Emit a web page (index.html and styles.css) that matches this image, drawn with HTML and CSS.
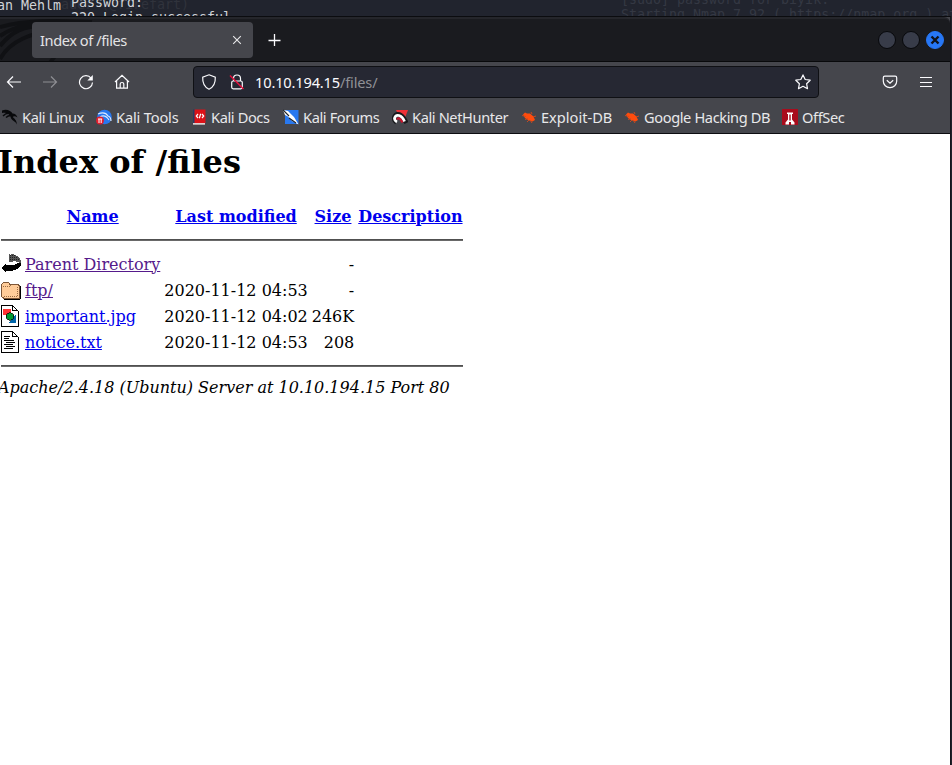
FILE: index.html
```html
<!DOCTYPE html>
<html lang="en">
<head>
<meta charset="utf-8">
<title>Index of /files</title>
<link rel="stylesheet" href="styles.css">
</head>
<body>
<div class="desktop">
  <div class="terminals">
    <pre class="term term-left">an Mehlm</pre>
    <pre class="term term-ghost">auer (@firefart)</pre>
    <pre class="term term-main">Password:
220 Login successful.</pre>
    <pre class="term term-faint">[sudo] password for biyik:
Starting Nmap 7.92 ( https://nmap.org ) at</pre>
  </div>
  <div class="browser">
    <header class="titlebar">
      <svg class="dragon" width="100" height="42" viewBox="0 0 100 42"><path d="M0 8C30 0 60 2 92 3M0 17C16 6 34 3 60 5M0 27C12 12 24 7 44 7M0 40C10 22 30 14 60 10M50 44C54 36 62 30 74 26" fill="none" stroke="#101114" stroke-width="4"/></svg>
      <div class="tab"><span>Index of /files</span>
        <svg width="10" height="10" viewBox="0 0 10 10"><path d="M1.2 1.2 8.800 8.800M8.800 1.200 1.200 8.800" stroke="#e8e8ea" stroke-width="1.100"/></svg>
      </div>
      <svg class="newtab" width="14" height="14" viewBox="0 0 14 14"><path d="M6.500 1v12M.5 7.500h12" stroke="#fbfbfe" stroke-width="1.300"/></svg>
      <div class="controls">
        <i class="dot"></i><i class="dot"></i>
        <i class="dot close"><svg width="10" height="10" viewBox="0 0 10 10"><path d="M1.500 1.500 8.500 8.500M8.500 1.500 1.500 8.500" stroke="#11131a" stroke-width="2.400"/></svg></i>
      </div>
    </header>
    <nav class="toolbar">
      <div class="navbuttons">
        <svg viewBox="0 0 16 16"><path d="M15 8H1.500M7 2.500 1.500 8 7 13.500"/></svg>
        <svg class="disabled" viewBox="0 0 16 16"><path d="M1 8h13.500M9 2.500 14.500 8 9 13.500"/></svg>
        <svg viewBox="0 0 16 16"><path d="M13.200 4.300A6.500 6.500 0 1 0 14.500 8.500"/><path d="M14.800 1v5.500H9.300Z" fill="#fbfbfe" stroke="none"/></svg>
        <svg viewBox="0 0 16 16"><path d="M1 8 8 1.300 15 8M2.600 7v7.200h10.800V7M6.200 14V10q0-1.500 1.800-1.500T9.800 10v4"/></svg>
      </div>
      <div class="urlbar">
        <svg viewBox="0 0 16 16"><path d="M8 .8 14.300 3.100C14.600 9 12.300 13.200 8 15.200 3.700 13.200 1.400 9 1.700 3.100Z"/></svg>
        <svg class="lock" viewBox="0 0 16 16"><path d="M4.500 7V4.500a3.500 3.500 0 0 1 7 0V7M2.700 8.500q0-1.500 1.500-1.500h7.600q1.500 0 1.500 1.500v4.800q0 1.500-1.500 1.500H4.200q-1.500 0-1.500-1.500Z"/><path d="M1 1.500 14.500 15" stroke="#e4103c" stroke-width="1.500"/></svg>
        <span class="url">10.10.194.15<span>/files/</span></span>
        <svg class="star" viewBox="0 0 16 16"><path d="M8 .9 10.200 5.500 15.200 6.200 11.600 9.700 12.500 14.700 8 12.300 3.500 14.700 4.400 9.700 .8 6.200 5.800 5.500Z" stroke-linejoin="round"/></svg>
      </div>
      <svg class="pocket" viewBox="0 0 16 16"><path d="M2.800 2.200h10.400q1.500 0 1.500 1.500V7.300A6.700 6.300 0 0 1 1.300 7.300V3.700q0-1.500 1.500-1.500ZM4.800 6.300 8 9.300l3.200-3"/></svg>
      <svg class="menu" viewBox="0 0 16 16"><path d="M2 3.500h12M2 8.500h12M2 12.500h12"/></svg>
    </nav>
    <div class="bookmarks">
      <a><svg viewBox="0 0 16 16"><path d="M0 1.500C5-.5 9 2 10.500 4.500 13 4.500 14.500 6 15.500 8.500 13.500 7 11.500 7 10.700 8c1.500 1.500 4 3 4.300 7.500C13.500 11.500 9 12 8.500 7.500 7 4.500 4 3 0 4Z" fill="#08090b"/><path d="M1 7q4-4 8-2M4 8.500q2-2 5-2" fill="none" stroke="#08090b" stroke-width="1.400"/></svg>Kali Linux</a>
      <a><svg class="tools" viewBox="0 0 16 16"><circle cx="8.500" cy="8" r="7.300" fill="#2777ef"/><path d="M2 5q7-3 10 2 3 1 3 5M4 8q5-3 9 3" fill="none" stroke="#d9e8ff" stroke-width="1.200"/><circle cx="4" cy="11.500" r="3.900" fill="#e21c2c"/><path d="M2 10h4.200M3 10v4M5.200 10v4" stroke="#fff" stroke-width="1"/></svg>Kali Tools</a>
      <a><svg viewBox="0 0 16 16"><path d="M2 .5h2V14H2Z" fill="#273b65"/><path d="M3.500 .5h11V14h-11Z" fill="#db1218"/><path d="M2 14h12v1.700H2Z" fill="#ddd0d0"/><path d="M7 5 5.300 7 7 9M11 5l1.700 2L11 9M9.700 4.800 8.300 9.200" fill="none" stroke="#fff" stroke-width="1.200"/></svg>Kali Docs</a>
      <a><svg viewBox="0 0 16 16"><path d="M2 1h13.500v14H2Z" fill="#2878ef"/><path d="M0 1 5 2 11 8 15.500 15.500 9 12 5 7.500 2 6Z" fill="#fff"/><path d="M0 1 6 7M6 9l7 5" stroke="#20242b" stroke-width="1.200"/></svg>Kali Forums</a>
      <a><svg viewBox="0 0 16 16"><path d="M4 1h12L12.500 10 7 7Z" fill="#ee3036"/><path d="M4.500 13.500C0 10 2.500 4.500 7.500 5.500c3.500 1 4.500 4 7 8.500" fill="none" stroke="#17181b" stroke-width="4.500"/><path d="M5 13C.5 10.500 3 5.500 7 6.500q3.500 1 5.500 6" fill="none" stroke="#fff" stroke-width="2.800"/><path d="M5 10.500q2-3.500 5.500 3" fill="none" stroke="#c9142c" stroke-width="2"/></svg>Kali NetHunter</a>
      <a><svg viewBox="0 0 16 16"><path d="M2 5.500 4 3.500 6 4.500 9 4.500 12.500 7.500 14 11 11.500 12.500 7 11 4 9Z" fill="#ff4c0d"/><path d="M1 6.500l4 1M4 10.500l3-1M6 13l2-2M10 3l1 2M12 8l3-1M9 11l2 3" stroke="#d6481b" stroke-width=".9"/></svg>Exploit-DB</a>
      <a><svg viewBox="0 0 16 16"><path d="M2 5.500 4 3.500 6 4.500 9 4.500 12.500 7.500 14 11 11.500 12.500 7 11 4 9Z" fill="#ff4c0d"/><path d="M1 6.500l4 1M4 10.500l3-1M6 13l2-2M10 3l1 2M12 8l3-1M9 11l2 3" stroke="#d6481b" stroke-width=".9"/></svg>Google Hacking DB</a>
      <a><svg viewBox="0 0 16 16"><path d="M0 0h16v16H0Z" fill="#a90c1d"/><path d="M5 3.500h6V5h-1v5.500l2.500 3V15.500H9V13H7v2.500H3.500V13.500L6 10.500V5H5Z" fill="#fff"/><path d="M7.300 5.500h1.400v6H7.300Z" fill="#a90c1d"/></svg>OffSec</a>
    </div>
    <main class="page">
      <h1>Index of /files</h1>
      <table>
        <tr><th></th><th><a href="#">Name</a></th><th><a href="#">Last modified</a></th><th><a href="#">Size</a></th><th><a href="#">Description</a></th></tr>
        <tr><td colspan="5"><hr></td></tr>
        <tr><td><svg class="file" viewBox="0 0 20 22"><path d="M8 1h1v1h1V1h3v1h2v1h2v1h1v1h1v2h1v4h-2V9h-3V8h-3v1H8Z" fill="#555"/><path d="M9 2.500h6M9 4.500h8M9 6.500h9" stroke="#222" stroke-dasharray="1 1"/><path d="M0 15 5 10v2q8 1 12-2h3v3q-4 5-12 5H5v2Z" fill="#000"/></svg></td><td><a class="visited" href="#">Parent Directory</a></td><td></td><td class="num">-</td><td></td></tr>
        <tr><td><svg class="file" viewBox="0 0 20 22"><path d="M2 4h7l1 2h8l2 2v12l-2 1H4l-3-2Z" fill="#000"/><path d="M.5 5.500 2.500 3.500h5l1.500 2h8l1 1v12.500H2.500L.5 17.500Z" fill="#ffcc99" stroke="#7d5637"/><path d="M2 7.500h7l1-1M16.500 8v10M3 17.500h14" fill="none" stroke="#996b43" stroke-dasharray="1 1"/></svg></td><td><a class="visited" href="#">ftp/</a></td><td class="num">2020-11-12 04:53</td><td class="num">-</td><td></td></tr>
        <tr><td><svg class="file" viewBox="0 0 20 22"><path d="M.5 .5h11l6 6v15H.5Z" fill="#fff" stroke="#000"/><path d="M11.500 .5v5h5M17 6v15H1" fill="none" stroke="#000"/><path d="M2 4h8v6H2Z" fill="#f33"/><path d="M8 18 15 9v9Z" fill="#06a"/><circle cx="9" cy="11.500" r="3.700" fill="#093" stroke="#000" stroke-width=".7"/></svg></td><td><a href="#">important.jpg</a></td><td class="num">2020-11-12 04:02</td><td class="num">246K</td><td></td></tr>
        <tr><td><svg class="file" viewBox="0 0 20 22"><path d="M.5 .5h11l6 6v15H.5Z" fill="#fff" stroke="#000"/><path d="M11.500 .5v5h5M17 6v15H1" fill="none" stroke="#000"/><path d="M3 5.500h6M3 7.500h5M3 9.500h10M5 11.500h9M3 13.500h9M5 15.500h9M3 17.500h9" stroke="#000"/></svg></td><td><a href="#">notice.txt</a></td><td class="num">2020-11-12 04:53</td><td class="num">208</td><td></td></tr>
        <tr><td colspan="5"><hr></td></tr>
      </table>
      <address>Apache/2.4.18 (Ubuntu) Server at 10.10.194.15 Port 80</address>
    </main>
  </div>
</div>
</body>
</html>
```

FILE: styles.css
```css
* { box-sizing: border-box; }
body { margin: 0; background: #20232c; font-family: "Noto Sans", sans-serif; }
.desktop { width: 952px; height: 765px; overflow: hidden; display: flex; flex-direction: column; }
.terminals { position: relative; height: 16px; flex: none; overflow: hidden; background: #21242e; }
.term { position: absolute; margin: 0; font: 13.3px/15px "DejaVu Sans Mono", monospace; color: #d0d3d8; white-space: pre; }
.term-left { left: -3px; top: -2px; width: 64px; overflow: hidden; }
.term-ghost { left: 61px; top: -3px; color: #30333c; }
.term-main { left: 71px; top: -5px; }
.term-faint { left: 621px; top: -8px; color: #343843; }
.browser { width: 951px; flex: 1; display: flex; flex-direction: column; border-top: 1px solid #0b0c0f; border-right: 1px solid #15161c; background: #45464c; }
.titlebar { position: relative; height: 45px; flex: none; display: flex; align-items: center; background: #1a1b1f; border-top: 2px solid #25262b; border-bottom: 1px solid #08090b; border-radius: 0 6px 0 0; padding-left: 32px; }
.dragon { position: absolute; left: 0; top: 0; }
.tab { position: relative; width: 221px; height: 36px; display: flex; align-items: center; justify-content: space-between; padding: 0 11px 0 8px; border-radius: 4px; background: #45464c; color: #e3e3e5; font-size: 14.6px; letter-spacing: -.42px; }
.newtab { margin-left: 15px; }
.controls { margin-left: auto; display: flex; gap: 6px; padding-right: 6px; }
.dot { width: 18px; height: 18px; display: flex; align-items: center; justify-content: center; border-radius: 50%; background: #383c49; border: 1px solid #07080b; }
.close { background: #2777f5; border-color: #2777f5; }
.toolbar { height: 40px; flex: none; display: flex; align-items: center; background: #45464c; padding-left: 6px; }
.toolbar svg { width: 16px; height: 16px; flex: none; fill: none; stroke: #fbfbfe; stroke-width: 1.2; }
.toolbar .disabled { opacity: .4; }
.navbuttons { width: 187px; display: flex; gap: 20px; }
.urlbar { width: 626px; height: 32px; display: flex; align-items: center; padding: 0 7px; background: #262833; border: 1px solid #0f1014; border-radius: 4px; }
.lock { margin-left: 12px; }
.url { margin-left: 10px; color: #fbfbfe; font-size: 14.6px; letter-spacing: -.16px; }
.url span { color: #8f9096; }
.star { margin-left: auto; }
.pocket { margin-left: 63px; }
.menu { margin-left: 20px; }
.bookmarks { height: 32px; flex: none; display: grid; grid-template-columns: 94px 95px 92px 109px 129px 103px 158px 80px; align-items: center; padding: 0 0 1px 2px; background: #45464c; border-bottom: 1px solid #0c0c10; color: #e8e8ea; font-size: 14.6px; letter-spacing: -.38px; }
.bookmarks a { display: flex; align-items: center; gap: 4px; white-space: nowrap; }
.bookmarks a:nth-child(2) { letter-spacing: -.15px; }
.bookmarks a:nth-child(6) { letter-spacing: 0; }
.bookmarks svg { width: 16px; height: 16px; flex: none; }
.page { flex: 1; overflow: hidden; background: #fff; color: #000; font: 16px/19px "DejaVu Serif", serif; padding-top: 9px; }
h1 { margin: 0 0 23px -2px; font-size: 32px; line-height: 38px; }
table { margin-left: -2px; border-spacing: 2px; border-collapse: separate; white-space: nowrap; }
th, td { padding: 1px; }
th { padding-bottom: 2px; }
a { color: #00e; }
.bookmarks a { color: inherit; }
a.visited { color: #551a8b; }
.num { text-align: right; }
hr { height: 2px; margin: 8px 0; border: 0; background: #696969; border-top: 1px solid #505050; }
.file { display: block; width: 20px; height: 22px; shape-rendering: crispEdges; }
address { margin-left: -2px; font-style: italic; }
```
